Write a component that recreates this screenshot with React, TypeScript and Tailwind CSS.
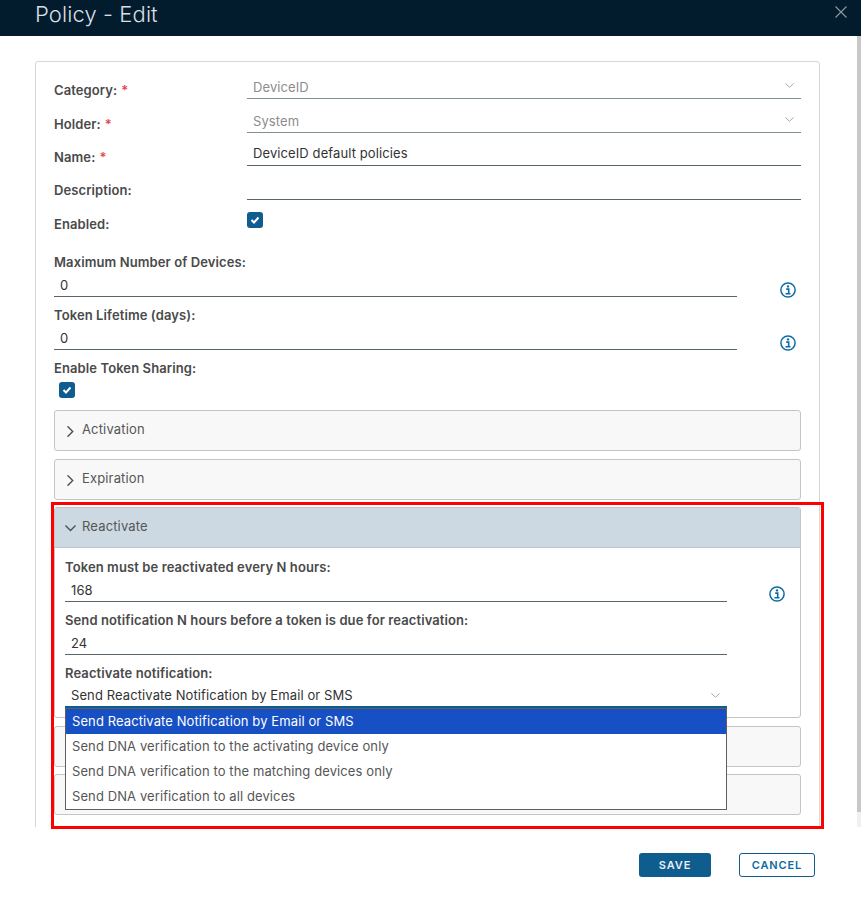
import React from "react";

const ChevronDown: React.FC<{ className?: string }> = ({ className }) => (
  <svg width="9" height="5" viewBox="0 0 9 5" fill="none" stroke="currentColor" className={className}>
    <path d="M0.400 0.400L4.500 4.300L8.600 0.400" strokeWidth="1" />
  </svg>
);

const AccordionChevron: React.FC<{ open?: boolean }> = ({ open }) => (
  <svg width="11" height="11" viewBox="0 0 11 11" fill="none" stroke="currentColor" className="mr-[6px] mt-[2px] shrink-0 text-[#4f4f4f]">
    {open ? <path d="M0.500 2.500L5.500 7.500L10.500 2.500" strokeWidth="1.400" /> : <path d="M2.500 0.300L7.700 5.500L2.500 10.700" strokeWidth="1.400" />}
  </svg>
);

const InfoIcon: React.FC = () => (
  <svg width="16" height="16" viewBox="0 0 16 16" fill="none" className="shrink-0 text-[#0f6ba3]">
    <circle cx="8" cy="8" r="7.100" stroke="currentColor" strokeWidth="1.500" />
    <circle cx="8" cy="4.400" r="1.200" fill="currentColor" />
    <path d="M6.200 7.100h2.500v4.400M5.500 11.800h5" stroke="currentColor" strokeWidth="1.600" />
  </svg>
);

const Checkbox: React.FC = () => (
  <div className="flex h-4 w-4 items-center justify-center rounded-[3px] bg-[#0f5c8f]">
    <svg width="10" height="10" viewBox="0 0 10 10" fill="none">
      <path d="M1.500 5l2.500 2.500 4.500-5" stroke="white" strokeWidth="2" />
    </svg>
  </div>
);

const Label: React.FC<{ text: string; required?: boolean }> = ({ text, required }) => (
  <span className="text-[13px] font-semibold tracking-[0.1px] text-[#4a4a4a]">
    {text}
    {required && <span className="ml-1 text-[#e5484d]">*</span>}
  </span>
);

const FormRow: React.FC<{
  label: string;
  value?: string;
  required?: boolean;
  disabled?: boolean;
  height: string;
}> = ({ label, value, required, disabled, height }) => (
  <div className={`flex items-end ${height}`}>
    <div className={`w-[193px] leading-[18px] ${required ? "" : "pb-px"}`}>
      <Label text={label} required={required} />
    </div>
    <div
      className={`flex h-[26px] flex-1 items-center justify-between border-b pl-[6px] pr-[7px] text-[13px] tracking-[0.1px] ${
        disabled ? "border-[#7f8f96] text-[#8c8c8c]" : "border-[#56646c] text-[#333333]"
      }`}
    >
      <span className={disabled ? "mt-[4px]" : "mt-[2px]"}>{value}</span>
      {disabled && <ChevronDown className="-mt-px text-[#a8a8a8]" />}
    </div>
  </div>
);

const Field: React.FC<{ label: string; value: string; className?: string }> = ({ label, value, className }) => (
  <div className={className}>
    <div className="h-[18px] leading-[16px]">
      <Label text={label} />
    </div>
    <div className="flex h-[26px] items-center border-b border-[#56646c] pl-[6px] pt-[4px] text-[13px] tracking-[0.1px] text-[#333333]">
      {value}
    </div>
  </div>
);

const Accordion: React.FC<{ title?: string }> = ({ title }) => (
  <div className="flex h-[41px] items-center rounded-[3px] border border-[#c4c4c4] bg-[#f8f8f8] pl-[10px] text-[13px] tracking-[0.15px] text-[#565656]">
    {title && (
      <>
        <AccordionChevron />
        <span className="-mt-[2px]">{title}</span>
      </>
    )}
  </div>
);

const options = [
  "Send Reactivate Notification by Email or SMS",
  "Send DNA verification to the activating device only",
  "Send DNA verification to the matching devices only",
  "Send DNA verification to all devices",
];

export default function App() {
  return (
    <div
      className="relative h-[903px] w-[861px] overflow-hidden bg-white"
      style={{ fontFamily: "Inter, 'Liberation Sans', sans-serif" }}
    >
      <header className="flex h-9 items-center justify-between bg-[#021c2d] pl-[35px] pr-[14px]">
        <h1 className="-mt-[7px] text-[22px] font-light tracking-[0.1px] text-[#d9dfe3]">Policy - Edit</h1>
        <svg width="12" height="12" viewBox="0 0 12 12" className="-mt-[12px] text-[#8a949b]" stroke="currentColor" fill="none">
          <path d="M0.500 0.500l11 11M11.500 0.500l-11 11" strokeWidth="1.200" />
        </svg>
      </header>

      <div className="flex h-[791px]">
        <div className="flex-1 overflow-hidden pl-[35px] pr-[37px] pt-[25px]">
          <div className="h-[900px] rounded-[3px] border border-[#d7d7d7] px-[18px] pt-[3px]">
            <FormRow label="Category:" value="DeviceID" required disabled height="h-[34px]" />
            <FormRow label="Holder:" value="System" required disabled height="h-[34px]" />
            <FormRow label="Name:" value="DeviceID default policies" required height="h-[33px]" />
            <FormRow label="Description:" height="h-[34px]" />
            <div className="flex h-[33px] items-start pt-[12px]">
              <div className="w-[193px] pt-[2px] leading-[18px]">
                <Label text="Enabled:" />
              </div>
              <Checkbox />
            </div>

            <div className="mt-[20px] flex items-end">
              <Field label="Maximum Number of Devices:" value="0" className="flex-1" />
              <div className="-mb-px ml-[43px] mr-[5px]">
                <InfoIcon />
              </div>
            </div>
            <div className="mt-[9px] flex items-end">
              <Field label="Token Lifetime (days):" value="0" className="flex-1" />
              <div className="-mb-px ml-[43px] mr-[5px]">
                <InfoIcon />
              </div>
            </div>
            <div className="mt-[9px] h-[18px] leading-[16px]">
              <Label text="Enable Token Sharing:" />
            </div>
            <div className="ml-[5px] mt-[5px]">
              <Checkbox />
            </div>

            <div className="mt-[12px]">
              <Accordion title="Activation" />
            </div>
            <div className="mt-[8px]">
              <Accordion title="Expiration" />
            </div>

            <div className="mt-[7px] rounded-[3px] border border-[#c4c4c4]">
              <div className="flex h-10 items-center border-b border-[#c4c4c4] bg-[#ccd9e2] pl-[10px] text-[13px] tracking-[0.15px] text-[#565656]">
                <AccordionChevron open />
                <span className="-mt-[2px]">Reactivate</span>
              </div>
              <div className="flex h-[169px] pl-[10px] pt-[10px]">
                <div className="w-[662px]">
                  <Field label="Token must be reactivated every N hours:" value="168" />
                  <Field label="Send notification N hours before a token is due for reactivation:" value="24" className="mt-[9px]" />
                  <div className="relative mt-[9px]">
                    <div className="h-[18px] leading-[16px]">
                      <Label text="Reactivate notification:" />
                    </div>
                    <div className="flex h-[26px] items-center justify-between pl-[6px] pr-[7px] pt-[2px] text-[13px] tracking-[0.1px] text-[#333333]">
                      <span>{options[0]}</span>
                      <ChevronDown className="-mt-[2px] text-[#a8a8a8]" />
                    </div>
                    {/* native select popup sits over the panels below */}
                    <div className="absolute left-0 right-0 top-[42px] z-10 border-t-2 border-[#0f5c8f]">
                      <div className="border border-[#5f5f5f] bg-white text-[13px] tracking-[0.1px] text-[#565656]">
                        {options.map((o, i) => (
                          <div
                            key={o}
                            className={`flex h-[25px] items-center pl-[6px] ${i === 0 ? "bg-[#1750c4] text-white" : ""}`}
                          >
                            {o}
                          </div>
                        ))}
                      </div>
                    </div>
                  </div>
                </div>
                <div className="ml-[42px] mt-[28px]">
                  <InfoIcon />
                </div>
              </div>
            </div>

            <div className="mt-[8px]">
              <Accordion />
            </div>
            <div className="mt-[7px]">
              <Accordion />
            </div>
          </div>
        </div>
        <div className="flex w-1 flex-col">
          <div className="h-[776px] bg-[#c8c8c8]" />
          <div className="flex-1 bg-[#f0f0f0]" />
        </div>
      </div>

      <footer className="flex justify-end gap-[28px] pr-[46px] pt-[26px]">
        <button className="h-6 w-[72px] rounded-[3px] bg-[#0f5c8f] text-[11px] font-semibold tracking-[0.08em] text-[#e8eef2]">
          SAVE
        </button>
        <button className="h-6 w-[76px] rounded-[3px] border border-[#0f5c8f] bg-white text-[11px] font-semibold tracking-[0.08em] text-[#0f6ba3]">
          CANCEL
        </button>
      </footer>

      {/* red annotation frame from the original screenshot */}
      <div className="pointer-events-none absolute left-[51px] top-[502px] z-20 h-[327px] w-[773px] border-[3px] border-[#ff0000]" />
    </div>
  );
}
